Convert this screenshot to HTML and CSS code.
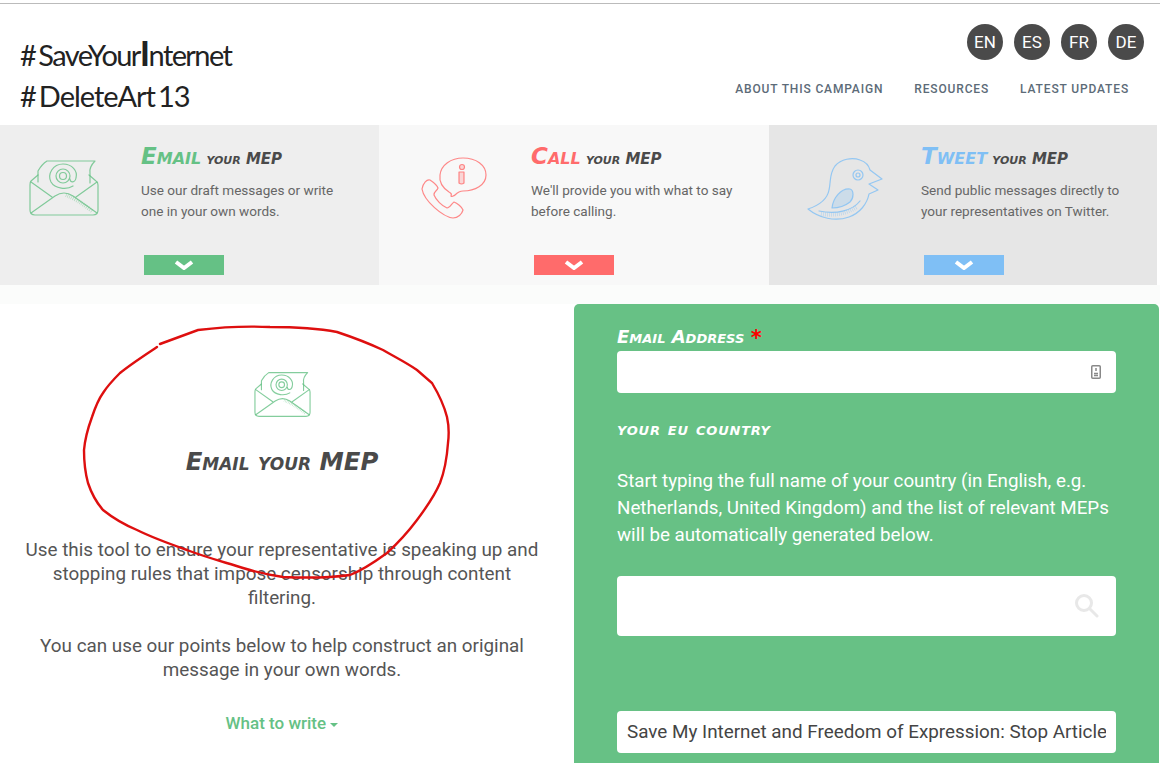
FILE: index.html
```html
<!DOCTYPE html>
<html lang="en">
<head>
    <meta charset="UTF-8">
    <meta name="viewport" content="width=device-width, initial-scale=1.0">
    <title>#SaveYourInternet</title>
    <link rel="stylesheet" href="styles.css">
</head>
<body>
    <svg class="defs" width="0" height="0" aria-hidden="true">
        <symbol id="icon-email" viewBox="0 0 70 58">
            <path d="M9 16 2 22Q1 23 1 26V51Q1 56 6 56H64Q69 56 69 51V26Q69 23 67 22L60 16"/>
            <path d="M9 23V12Q13 5 18 2H66Q60 8 61 14V24"/>
            <path d="M2 54 26 37Q35 31 44 37L68 54M2 23 23 38M68 23 47 38"/>
            <path d="M44 27C38 31 26 30 22 23 18 15 24 5 34 5 43 5 49 12 47 19 46 24 41 24 41 20"/>
            <circle cx="34" cy="17" r="7"/>
            <circle cx="34" cy="17" r="3.5"/>
            <path class="hatch" d="M37 36Q48 40 63 52" stroke-width="4" stroke-dasharray="0.7 1.300"/>
        </symbol>
    </svg>

    <header class="site-header">
        <div class="logo">
            <div class="logo-save"><span class="hash">#</span>SaveYour<span class="tall">I</span>nternet</div>
            <div><span class="hash">#</span>DeleteArt<span class="hash"></span>13</div>
        </div>
        <div class="header-right">
            <ul class="langs">
                <li>EN</li>
                <li>ES</li>
                <li>FR</li>
                <li>DE</li>
            </ul>
            <nav>
                <ul class="menu">
                    <li><a href="#about">About this campaign</a></li>
                    <li><a href="#resources">Resources</a></li>
                    <li><a href="#updates">Latest updates</a></li>
                </ul>
            </nav>
        </div>
    </header>

    <section class="actions">
        <div class="action action-email">
            <svg class="action-icon" width="70" height="58"><use href="#icon-email"/></svg>
            <h3><span>Email</span> your MEP</h3>
            <p>Use our draft messages or write<br>one in your own words.</p>
            <div class="action-bar"><svg width="20" height="10" viewBox="0 0 20 10"><path d="M2 2 10 8 18 2"/></svg></div>
        </div>
        <div class="action action-call">
            <svg class="action-icon" width="66" height="62" viewBox="0 0 66 62">
                <path d="M28 35C22 31 18 25 19 18 20 8 30 1 42 1 55 1 65 8 65 18 65 28 54 34 42 34 39 34 37 35 34 38 33 39 30 40 30 39 31 37 30 36 28 35Z"/>
                <path d="M1 32C2 26 6 22 9 23 12 25 16 28 17 31 16 34 13 34 13 38 15 43 21 49 26 51 29 51 31 46 33 45 36 46 41 50 42 53 41 57 37 61 32 61 22 60 3 44 1 32Z"/>
                <circle class="dot" cx="41" cy="10" r="2.500"/>
                <path class="dot" d="M38 15H43V26Q40.500 28 38 26Z"/>
            </svg>
            <h3><span>Call</span> your MEP</h3>
            <p>We'll provide you with what to say<br>before calling.</p>
            <div class="action-bar"><svg width="20" height="10" viewBox="0 0 20 10"><path d="M2 2 10 8 18 2"/></svg></div>
        </div>
        <div class="action action-tweet">
            <svg class="action-icon" width="76" height="63" viewBox="0 0 76 63">
                <path d="M1 52C10 49 20 44 22 33 24 25 22 17 28 9 34 2 45 0 53 3 59 5 62 9 63 13L75 22 62 27 71 33 62 37C60 47 53 56 42 60 28 65 12 61 1 52Z"/>
                <path d="M53 44C46 53 30 58 12 54"/>
                <circle cx="51" cy="18" r="5"/>
                <circle cx="51" cy="18" r="2"/>
                <path class="dot" d="M25 51C26 41 34 31 43 32 47 33 47 41 43 45 38 49 31 51 25 51Z"/>
                <path class="hatch" d="M14 57Q34 60 50 50" stroke-width="4" stroke-dasharray="0.7 1.300"/>
            </svg>
            <h3><span>Tweet</span> your MEP</h3>
            <p>Send public messages directly to<br>your representatives on Twitter.</p>
            <div class="action-bar"><svg width="20" height="10" viewBox="0 0 20 10"><path d="M2 2 10 8 18 2"/></svg></div>
        </div>
    </section>

    <main class="content">
        <section class="intro">
            <svg class="intro-icon" width="57" height="47"><use href="#icon-email"/></svg>
            <h2>Email your MEP</h2>
            <p>Use this tool to ensure your representative is speaking up and<br>stopping rules that impose censorship through content<br>filtering.</p>
            <p>You can use our points below to help construct an original<br>message in your own words.</p>
            <a class="what-to-write" href="#write">What to write <i class="caret"></i></a>
        </section>

        <form class="mep-form">
            <label class="form-label" for="email">Email Address <b>*</b></label>
            <div class="field">
                <input id="email" class="input" type="text">
                <svg class="contact-icon" width="10" height="14" viewBox="0 0 10 14">
                    <rect x="0.750" y="0.750" width="8.500" height="12.500" rx="1"/>
                    <path d="M5 3V6M3 8.500H7M3 10.500H7"/>
                </svg>
            </div>
            <label class="form-label form-label-country" for="country">your eu country</label>
            <p class="hint">Start typing the full name of your country (in English, e.g.<br>Netherlands, United Kingdom) and the list of relevant MEPs<br>will be automatically generated below.</p>
            <div class="field">
                <input id="country" class="input input-tall" type="text">
                <svg class="search-icon" width="25" height="25" viewBox="0 0 25 25">
                    <circle cx="10" cy="10" r="7.500"/>
                    <path d="M15.500 15.500 23 23"/>
                </svg>
            </div>
            <input class="input input-subject" type="text" value="Save My Internet and Freedom of Expression: Stop Article 13">
        </form>

        <svg class="scribble" width="380" height="260" viewBox="80 324 380 260">
            <path d="M160 344 198 330C222 327 248 326 270 327 292 327 316 328 337 332 352 337 368 343 383 350 395 357 407 363 417 370L432 383C438 393 444 405 447 417 449 426 449 435 448 443 447 457 445 470 440 483 434 497 426 508 417 520 408 532 398 543 387 553 376 561 363 570 350 575 328 578 305 578 283 577 269 575 256 572 243 568 224 562 205 557 187 550 170 544 153 538 137 530 125 525 113 518 103 510 96 502 91 492 88 483 85 472 84 461 84 450 85 438 88 428 92 417 95 408 98 400 103 393 108 385 114 379 120 373 131 364 145 355 157 347"/>
        </svg>
    </main>
</body>
</html>
```

FILE: styles.css
```css
html, body {
    height: 763px;
    overflow: hidden;
}
body {
    font-family: Roboto, Arial, sans-serif;
    margin: 0;
    padding: 3px 0 0;
    box-sizing: border-box;
    color: #555;
    background-color: #fff;
}
.defs {
    position: absolute;
}
ul {
    list-style: none;
    margin: 0;
    padding: 0;
}

/* header */
.site-header {
    height: 121px;
    border-top: 1px solid #bbb;
    display: flex;
    justify-content: space-between;
}
.logo {
    padding: 30px 0 0 20px;
    font-family: Lato, sans-serif;
    font-size: 29px;
    line-height: 41px;
    letter-spacing: -1px;
    color: #222;
}
.logo-save {
    letter-spacing: -1.600px;
}
.hash {
    margin-right: 3px;
}
.tall {
    font-size: 35px;
    font-weight: bold;
    line-height: 0;
}
.header-right {
    padding: 20px 16px 0 0;
    display: flex;
    flex-direction: column;
    align-items: flex-end;
}
.langs {
    display: flex;
    gap: 11px;
}
.langs li {
    width: 36px;
    height: 36px;
    line-height: 36px;
    border-radius: 50%;
    text-align: center;
    font-size: 17px;
    color: #fff;
    background-color: #4a4a4a;
}
.menu {
    display: flex;
    gap: 31px;
    margin-top: 21px;
    padding-right: 15px;
}
.menu a {
    font-size: 12px;
    font-weight: 500;
    letter-spacing: 0.850px;
    line-height: 16px;
    display: block;
    text-transform: uppercase;
    text-decoration: none;
    color: #5c6b78;
}

/* three action panels */
.actions {
    display: grid;
    grid-template-columns: 379px 390px 388px;
    height: 160px;
}
.action {
    position: relative;
    padding: 21px 0 0 141px;
}
.action-call, .action-tweet {
    padding-left: 152px;
}
.action-email {
    background-color: #eee;
    --tint: #65c185;
}
.action-call {
    background-color: #f8f8f8;
    --tint: #ff6b6b;
}
.action-tweet {
    background-color: #e6e6e6;
    --tint: #7fbff5;
}
.action h3, .intro h2, .form-label {
    font-family: "DejaVu Sans", sans-serif;
    font-style: italic;
    font-weight: bold;
    font-variant: small-caps;
    margin: 0;
}
.action h3 {
    font-size: 15px;
    line-height: 26px;
    color: #4a4a4a;
}
.action h3 span {
    font-size: 23px;
    line-height: 0;
    color: var(--tint);
}
.action p {
    font-size: 13.550px;
    line-height: 21px;
    margin: 8px 0 0;
    color: #666;
}
.action-icon {
    position: absolute;
    left: 29px;
    top: 34px;
}
.action-call .action-icon {
    left: 42px;
    top: 32px;
}
.action-tweet .action-icon {
    left: 38px;
    top: 32px;
}
.action-icon, .intro-icon {
    fill: none;
    stroke: var(--tint, #65c185);
    stroke-opacity: 0.8;
    stroke-width: 1.200;
    stroke-linejoin: round;
    stroke-linecap: round;
    overflow: visible;
}
.intro-icon {
    stroke-width: 1.400;
}
.hatch {
    stroke-linecap: butt;
    opacity: 0.55;
}
.dot {
    fill: var(--tint);
    fill-opacity: 0.25;
}
.action-bar {
    position: absolute;
    left: 144px;
    bottom: 10px;
    width: 80px;
    height: 20px;
    background-color: var(--tint);
    display: flex;
    align-items: center;
    justify-content: center;
}
.action-call .action-bar, .action-tweet .action-bar {
    left: 155px;
}
.action-bar svg {
    fill: none;
    stroke: #fff;
    stroke-width: 4;
}

/* main area */
.content {
    position: relative;
    display: flex;
    padding-top: 19px;
    background: linear-gradient(#fbfcfb 19px, #fff 19px);
}
.intro {
    width: 564px;
    flex-shrink: 0;
    text-align: center;
    padding-top: 67px;
}
.intro-icon {
    display: block;
    margin: 0 auto;
}
.intro h2 {
    font-size: 24.400px;
    line-height: 32px;
    color: #4a4a4a;
    margin: 28px 0 60px;
}
.intro p {
    font-size: 18.850px;
    line-height: 24px;
    margin: 0 0 24px;
    color: #555;
}
.what-to-write {
    display: block;
    margin-top: 31px;
    font-size: 17px;
    font-weight: 500;
    color: #65c185;
    text-decoration: none;
}
.caret {
    display: inline-block;
    border-top: 4px solid #65c185;
    border-left: 4px solid transparent;
    border-right: 4px solid transparent;
    vertical-align: middle;
}
.mep-form {
    margin-left: 10px;
    width: 585px;
    height: 600px;
    box-sizing: border-box;
    padding: 22px 43px 0;
    background-color: #67c185;
    border-radius: 5px 5px 0 0;
    color: #fff;
}
.form-label {
    display: block;
    font-size: 18px;
    line-height: 22px;
    margin-bottom: 3px;
}
.form-label b {
    color: #f00;
    font-size: 21px;
    line-height: 0;
    vertical-align: -2px;
}
.form-label-country {
    letter-spacing: 0.800px;
    margin: 25px 0 0;
}
.field {
    position: relative;
}
.input {
    display: block;
    box-sizing: border-box;
    width: 499px;
    height: 42px;
    border: 0;
    border-radius: 4px;
    padding: 0 10px;
    background-color: #fff;
    font-family: Roboto, Arial, sans-serif;
    font-size: 18.850px;
    color: #444;
}
.input-tall {
    height: 60px;
}
.input-subject {
    margin-top: 75px;
}
.hint {
    font-size: 18.750px;
    line-height: 27px;
    margin: 28px 0 27px;
}
.contact-icon {
    position: absolute;
    right: 15px;
    top: 14px;
    fill: none;
    stroke: #888;
    stroke-width: 1.500;
}
.search-icon {
    position: absolute;
    right: 17px;
    top: 17px;
    fill: none;
    stroke: #e8e8e8;
    stroke-width: 3;
    stroke-linecap: round;
}
.scribble {
    position: absolute;
    left: 80px;
    top: 39px;
    fill: none;
    stroke: #de0f0f;
    stroke-width: 2.400;
    stroke-linecap: round;
    pointer-events: none;
}
```
